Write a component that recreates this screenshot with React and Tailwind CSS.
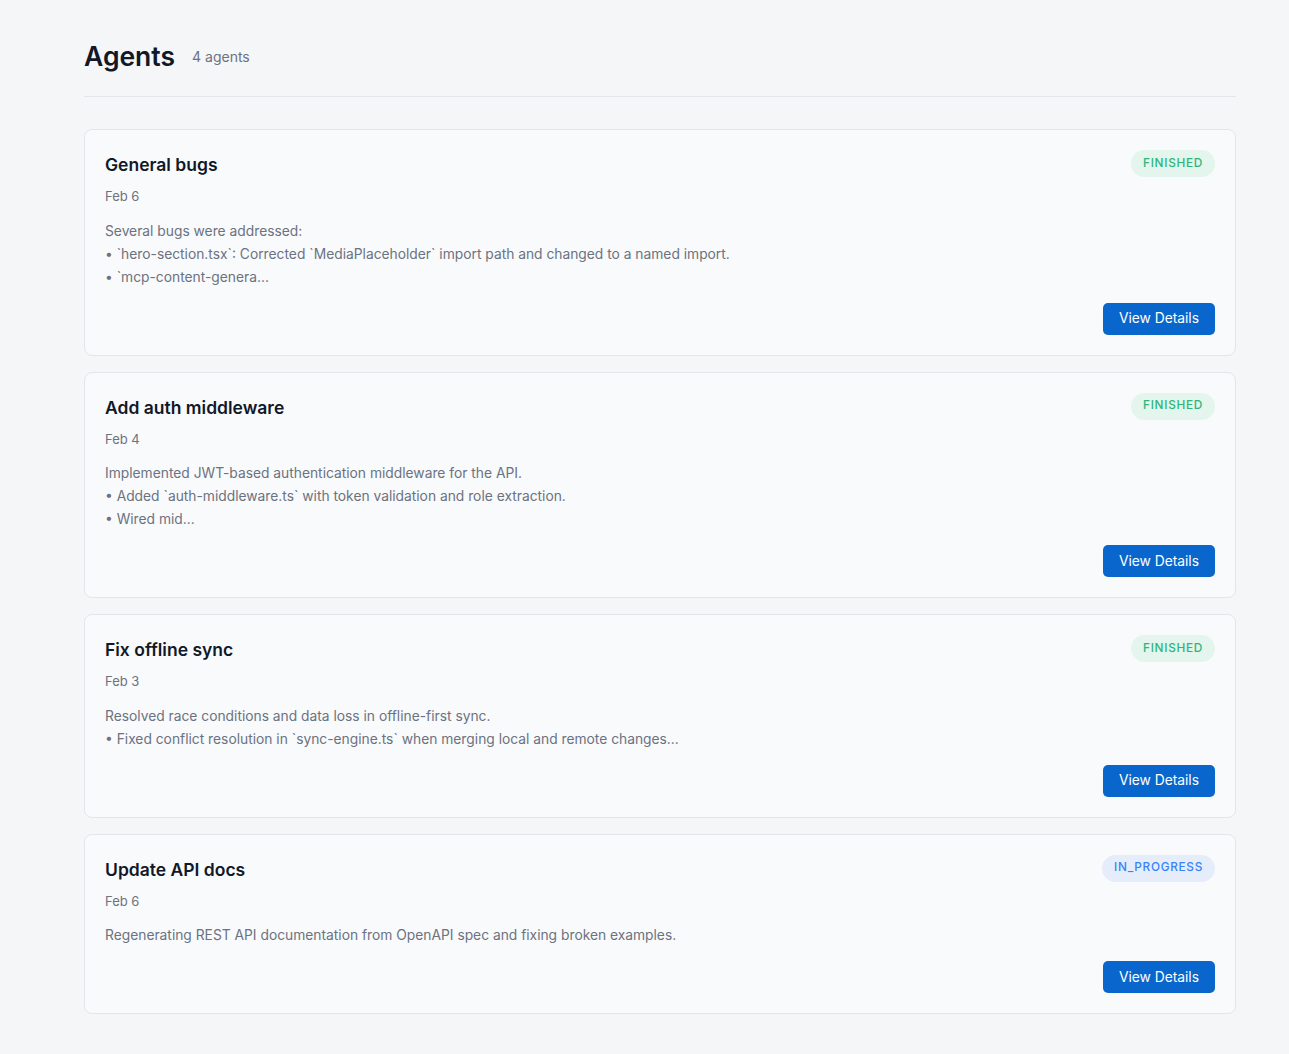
import React from "react";

const agents = [
  {
    id: 1,
    title: "General bugs",
    date: "Feb 6",
    status: "FINISHED",
    lines: [
      "Several bugs were addressed:",
      "• `hero-section.tsx`: Corrected `MediaPlaceholder` import path and changed to a named import.",
      "• `mcp-content-genera...",
    ],
  },
  {
    id: 2,
    title: "Add auth middleware",
    date: "Feb 4",
    status: "FINISHED",
    lines: [
      "Implemented JWT-based authentication middleware for the API.",
      "• Added `auth-middleware.ts` with token validation and role extraction.",
      "• Wired mid...",
    ],
  },
  {
    id: 3,
    title: "Fix offline sync",
    date: "Feb 3",
    status: "FINISHED",
    lines: [
      "Resolved race conditions and data loss in offline-first sync.",
      "• Fixed conflict resolution in `sync-engine.ts` when merging local and remote changes...",
    ],
  },
  {
    id: 4,
    title: "Update API docs",
    date: "Feb 6",
    status: "IN_PROGRESS",
    lines: [
      "Regenerating REST API documentation from OpenAPI spec and fixing broken examples.",
    ],
  },
];

function StatusBadge({ status }) {
  const done = status === "FINISHED";
  return (
    <span
      className={
        done
          ? "px-3 h-[27px] inline-flex items-center rounded-full bg-[#e3f5ec] text-[#2fb57a] text-[11.8px] font-medium tracking-[0.06em]"
          : "px-3 h-[27px] inline-flex items-center rounded-full bg-[#e5edfb] text-[#3b82f6] text-[11.8px] font-medium tracking-[0.06em]"
      }
    >
      {status}
    </span>
  );
}

function AgentCard({ agent }) {
  return (
    <div className="rounded-lg border border-[#e3e5ea] bg-[#f9fafc] p-5">
      <div className="flex items-start justify-between gap-4">
        <h2 className="text-[17.5px] leading-7 font-semibold text-[#111827] pt-px">{agent.title}</h2>
        <StatusBadge status={agent.status} />
      </div>
      <div className="mt-[7px] text-[13px] leading-5 text-[#6b7280]">{agent.date}</div>
      <div className="mt-[13.5px] text-[13.8px] leading-[23px] text-[#6b7280]">
        {agent.lines.map((l, i) => (
          <div key={i}>{l}</div>
        ))}
      </div>
      <div className="mt-[14px] flex justify-end">
        <button className="h-8 px-4 rounded-[5px] bg-[#0866cc] text-white text-[13.8px]">View Details</button>
      </div>
    </div>
  );
}

export default function App() {
  return (
    <div className="min-h-screen bg-[#f5f6f8] pl-[84px] pr-[53px] pt-[38px] pb-10 font-['Inter',sans-serif]">
      <div className="flex items-center gap-[17px] pb-[22px] border-b border-[#e3e5ea]">
        <h1 className="text-[26.5px] leading-9 font-semibold text-[#111827]">Agents</h1>
        <span className="text-sm text-[#6b7280] pt-0.5">{agents.length} agents</span>
      </div>
      <div className="mt-8 flex flex-col gap-4">
        {agents.map((a) => (
          <AgentCard key={a.id} agent={a} />
        ))}
      </div>
    </div>
  );
}
